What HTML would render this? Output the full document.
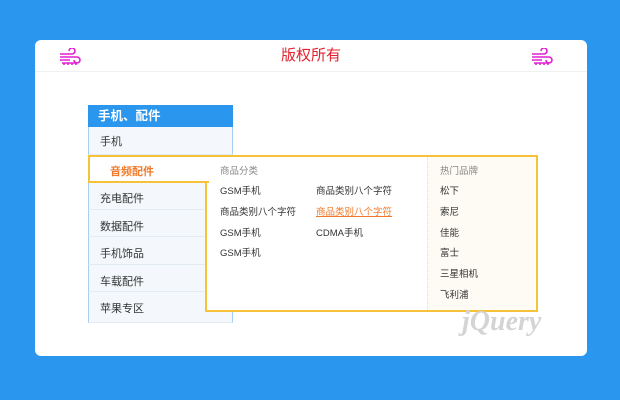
<!DOCTYPE html>
<html><head><meta charset="utf-8"><style>
body{margin:0;width:620px;height:400px;background:#2a96ee;font-family:"Liberation Sans","Noto Sans CJK SC",sans-serif;position:relative;overflow:hidden}
.card{position:absolute;left:35px;top:40px;width:552px;height:316px;background:#fff;border-radius:6px}
.hd{position:absolute;left:0;top:0;width:552px;height:31px;border-bottom:1px solid #eef0f2;text-align:center;line-height:32px;color:#e5202e;font-size:15px}
.ic{position:absolute;top:8px}
.menu{position:absolute;left:88px;top:105px;width:145px}
.mh{height:22px;background:#2a96ee;color:#fff;font-weight:bold;font-size:12.5px;line-height:22px;padding-left:10px}
.mi{position:absolute;left:0;height:27.5px;background:#f4f8fc;border-left:1px solid #a9cdee;border-right:1px solid #a9cdee;border-bottom:1px solid #e3ebf3;font-size:11px;color:#333;line-height:30px;padding-left:11px;box-sizing:border-box;width:145px}
.t{position:absolute;font-size:9.5px;color:#333;white-space:nowrap}
.g{color:#888}
</style></head><body>
<div class="card">
<div class="hd">版权所有</div>
<svg class="ic" style="left:23px" width="24" height="18" viewBox="0 0 24 18" fill="none" stroke="#e020d0" stroke-width="1.6"><path d="M2 6h12a3 3 0 1 0-3-3M2 9h17a3 3 0 1 1-3 3M2 12h10M4 15h16M6 15v2M10 15v2M14 15v2M18 15v2"/></svg>
<svg class="ic" style="left:495px" width="24" height="18" viewBox="0 0 24 18" fill="none" stroke="#e020d0" stroke-width="1.6"><path d="M2 6h12a3 3 0 1 0-3-3M2 9h17a3 3 0 1 1-3 3M2 12h10M4 15h16M6 15v2M10 15v2M14 15v2M18 15v2"/></svg>
</div>
<div class="menu">
<div class="mh">手机、配件</div>
<div class="mi" style="top:22px">手机</div>
<div class="mi" style="top:77px;line-height:34px">充电配件</div>
<div class="mi" style="top:104.5px;line-height:34px">数据配件</div>
<div class="mi" style="top:132px;line-height:34px">手机饰品</div>
<div class="mi" style="top:159.5px;line-height:34px">车载配件</div>
<div class="mi" style="top:187px;height:31px;line-height:34px">苹果专区</div>
</div>
<div style="position:absolute;left:205px;top:155px;border:2px solid #f6c23a;background:#fff;width:329px;height:153px"></div>
<div style="position:absolute;left:427px;top:157px;width:107px;height:153px;background:#fdfbf4;border-left:1px dotted #e8dcc0"></div>
<div style="position:absolute;left:88px;top:155px;width:119px;height:24px;border:2px solid #f6c23a;border-right:none;background:#fff"></div>
<div style="position:absolute;left:205px;top:157px;width:4px;height:24px;background:#fff"></div>
<div class="t" style="left:110px;top:163px;color:#f07a2a;font-size:11px;font-weight:bold">音频配件</div>
<div class="t g" style="left:220px;top:163px">商品分类</div>
<div class="t" style="left:220px;top:183px">GSM手机</div>
<div class="t" style="left:220px;top:204px">商品类别八个字符</div>
<div class="t" style="left:220px;top:225px">GSM手机</div>
<div class="t" style="left:220px;top:245px">GSM手机</div>
<div class="t" style="left:316px;top:183px">商品类别八个字符</div>
<div class="t" style="left:316px;top:204px;color:#f07a2a;text-decoration:underline">商品类别八个字符</div>
<div class="t" style="left:316px;top:225px">CDMA手机</div>
<div class="t g" style="left:440px;top:163px">热门品牌</div>
<div class="t" style="left:440px;top:183px">松下</div>
<div class="t" style="left:440px;top:204px">索尼</div>
<div class="t" style="left:440px;top:225px">佳能</div>
<div class="t" style="left:440px;top:245px">富士</div>
<div class="t" style="left:440px;top:266px">三星相机</div>
<div class="t" style="left:440px;top:287px">飞利浦</div>
<div style="position:absolute;left:462px;top:306px;font:italic bold 28px 'Liberation Serif',serif;color:#d4d4d4">jQuery</div>
</body></html>
